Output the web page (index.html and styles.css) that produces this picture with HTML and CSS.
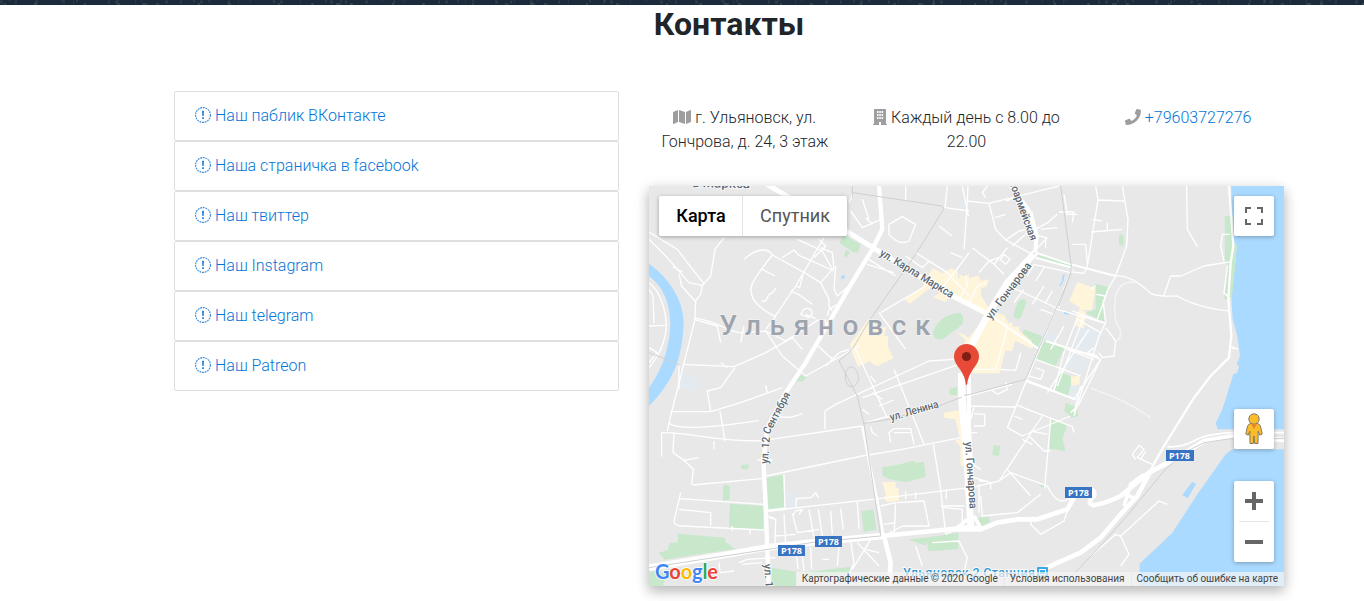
FILE: index.html
```html
<!DOCTYPE html>
<html lang="ru">
<head>
<meta charset="utf-8">
<title>Контакты</title>
<link rel="stylesheet" href="styles.css">
</head>
<body>
<svg class="defs" width="0" height="0" aria-hidden="true">
  <symbol id="bang" viewBox="0 0 16 16">
    <circle cx="8" cy="8" r="7.400" fill="none" stroke="#3289db" stroke-width="1.100" stroke-dasharray="1.900 .75"/>
    <path d="M7 3.800h2l-.3 5.200H7.300z M7.100 10.300h1.800V12H7.100z" fill="#2480dc"/>
  </symbol>
</svg>
<div class="hero-edge">
  <svg width="1364" height="5">
    <g fill="none" stroke="#747c73">
      <path d="M0 2H1364" stroke-width="3" opacity=".22" stroke-dasharray="3 12 2 18 3 25 2 8 1 34 2 5 3 17 1 29"/>
      <path d="M4 4H1364" stroke-width="2" opacity=".28" stroke-dasharray="2 28 3 47 2 31 3 22 5 9 3 39"/>
      <path d="M9 1H1364" stroke-width="2" opacity=".2" stroke-dasharray="1 51 2 13 2 40 1 22"/>
    </g>
  </svg>
</div>
<main class="contacts">
  <h2 class="title">Контакты</h2>
  <div class="columns">
    <ul class="links">
      <li><a href="#"><svg class="bang"><use href="#bang"/></svg>Наш паблик ВКонтакте</a></li>
      <li><a href="#"><svg class="bang"><use href="#bang"/></svg>Наша страничка в facebook</a></li>
      <li><a href="#"><svg class="bang"><use href="#bang"/></svg>Наш твиттер</a></li>
      <li><a href="#"><svg class="bang"><use href="#bang"/></svg>Наш Instagram</a></li>
      <li><a href="#"><svg class="bang"><use href="#bang"/></svg>Наш telegram</a></li>
      <li><a href="#"><svg class="bang"><use href="#bang"/></svg>Наш Patreon</a></li>
    </ul>
    <section class="place">
      <div class="facts">
        <p><svg class="fa" width="18" height="16" viewBox="0 0 576 512"><path d="M0 117.660v346.320c0 11.320 11.430 19.060 21.940 14.860L160 416V32L20.120 87.950A32.006 32.006 0 0 0 0 117.660zM192 416l192 64V96L192 32v384zM554.060 33.160L416 96v384l139.880-55.950A31.996 31.996 0 0 0 576 394.340V48.020c0-11.320-11.430-19.060-21.940-14.860z"/></svg> г. Ульяновск, ул. Гончрова, д. 24, 3 этаж</p>
        <p><svg class="fa" width="14" height="16" viewBox="0 0 14 16"><path fill-rule="evenodd" d="M1.500 0h11a.5.500 0 0 1 .5.500V15h.7a.3.300 0 0 1 .3.300V16H8v-3H6v3H0v-.7a.3.300 0 0 1 .3-.3H1V.5a.5.500 0 0 1 .5-.5zM4 2v2h1.500V2zM6.300 2v2h1.500V2zM8.600 2v2h1.500V2zM4 5v2h1.500V5zM6.300 5v2h1.500V5zM8.600 5v2h1.500V5zM4 8v2h1.500V8zM6.300 8v2h1.500V8zM8.600 8v2h1.500V8z"/></svg> Каждый день с 8.00 до 22.00</p>
        <p><svg class="fa" width="16" height="16" viewBox="0 0 512 512"><path d="M493.400 24.600l-104-24c-11.300-2.600-22.900 3.300-27.500 13.900l-48 112c-4.200 9.800-1.400 21.300 6.900 28l60.600 49.600c-36 76.700-98.900 140.500-177.200 177.200l-49.600-60.600c-6.800-8.300-18.200-11.100-28-6.900l-112 48C3.900 366.500-2 378.100.6 389.400l24 104C27.100 504.200 36.700 512 48 512c256.100 0 464-207.500 464-464 0-11.200-7.700-20.900-18.600-23.400z"/></svg> <a href="#">+79603727276</a></p>
      </div>
      <div class="map">
        <svg class="map-canvas" width="635" height="400" viewBox="649 186 635 400">
          <rect x="649" y="186" width="635" height="400" fill="#e8e8e8"/>

          <!-- areas, west half -->
          <g transform="translate(649 186) scale(.33333)">
            <path fill="#aadaff" d="M0 233C60 275 104 345 104 410C100 520 70 590 0 660V605C45 545 64 470 64 410C62 345 40 300 0 270zM577 270l10-3v10l-10 2z"/>
            <path fill="#e4ebf0" d="M100 560l50 15-10 42-50-10zM412 922h32v40l-30 5zM932 45h20v22h-20z"/>
            <g fill="#c8e8cb">
              <path d="M582 147l53 27-7 26-18-3-38-25zM590 192l13 5-10 17-8-3zM457 565l15 9-13 14-17-2z"/>
              <path d="M902 608l22-5v24l-22 1zM700 843l40-5 55-14 5 6 24-3 7 45-60 17-48-9-22-10zM275 840q5-5 20-5 8 4 4 12-10 5-22 1zM223 900q8-7 19 0v42l-20 2zM352 875l50-8 5 100-48 7zM243 953l100 7v75l-103-10zM637 975l37-4 8 60-38 7z"/>
              <path d="M86 1043l142 12 0 12 31 22-140 20-72 12-18-20 27-10 6-20 25-2zM778 1060l50-5 100-15v50l-90 6-5-30-3 13-23-8zM0 1155l50 5-7 40H0zM368 1145l75 12v43h-75zM460 1160l145-18v18l-120 18z"/>
            </g>
            <path fill="#fff5da" d="M850 247l32 15 25-16 20 12v20l33-14v86l-50-25-22 23-35-15 30-20-20-22-80 62-17-14 54-36zM603 475l55-75 12-3 15 30 28-4-8 25 13 5-2 28 18 35-50 25-24-15-33 16-15-34zM700 888h40v18h8l2 38-35 5-12-14 8-8zM885 680l42-7 20 10v160l-12-5v-55l-17-20 15-3-14-60-34-5zM925 440l18 3 17 15v12z"/>
          </g>

          <!-- areas, east half -->
          <g transform="translate(964 186) scale(.33333)">
            <path fill="#aadaff" d="M802 0V170L818 180L812 250L802 330L806 400L820 450L828 510L818 535L825 540L820 560L808 565L788 630L775 670L755 712L762 730H960V0zM960 790H805L785 805L700 925L625 1040L527 1133V1200H960zM685 887l11 7-25 43-16-10zM300 377l14 2v7l-14-2zM285 298l8-10 3-20 6-2-4 20-8 14z"/>
            <path fill="#e4ebf0" d="M350 425l65 15-25 65-60-20zM310 500l65 25-20 40-55-25zM322 575l25 0-15 60-18-6zM240 435l42 15-5 18-37-10z"/>
            <path fill="#c8e8cb" d="M-93 440Q-90 420-65 398Q-40 380-10 380Q2 395-5 415Q-20 430-45 445Q-70 470-89 455z"/>
            <g fill="#c8e8cb">
              <path d="M160 350Q170 335 183 341Q188 350 183 360L170 395Q153 405 148 388zM180 430l55 20-12 32-52-30zM242 460l60 25-30 60-55-25zM290 558l36 14-14 57-40-17zM305 650l35 15 3 25-20 5-22-20zM260 698l50 20-15 40 10 37-48-7zM88 777l20 3-3 30-20-3zM225 898l17-5-3 14zM42 995l32-3 4 18-30 12zM225 202l100 30v12l-105-30zM395 293l37 10-17 50 8 57-58-30 30-10z"/>
              <path d="M465 147q8-3 14 3v28q-8 4-14-3zM782 90h25v70l12 20-16 163-22-5 12-100-10-10z"/>
            </g>
            <path fill="#fff5da" d="M-15 265l25 12 35-8 5 15 25-4-7 22-17 5v20l30 50 40 10 12 25 10-3 5 15 17-3 2 15 35 28 7 22-13 0-10-7-32-15-10 30-20 0-17 68H25L0 470L70 390L-5 340zM340 288l55 20-12 65-28-2 10 8-5 48-27-7 5-30 10-25-32-20zM320 572l28-3-2 26-23 5z"/>
          </g>

          <!-- streets, west half -->
          <g class="road" transform="translate(649 186) scale(.33333)">
            <g stroke-width="4">
              <path d="M0 138L85 190L115 230L165 293L160 298L120 290L85 250L55 215L0 160M72 242L100 258M90 265L98 300L138 345M165 293L185 270L198 190L225 155M160 298L155 325L140 345L138 400L104 535L65 690L55 735"/>
              <path d="M285 220C330 180 360 190 370 207C320 270 300 300 307 320C310 350 340 370 378 392L440 300L525 155M370 207L470 262M340 250L378 270M425 315L448 325L490 355M380 305Q375 320 360 325L350 345L338 345M400 215L435 192L450 208L555 255M440 300L452 305L462 265"/>
              <path d="M470 262L515 290L540 340V360L550 375M515 290L550 250L520 195L445 160M515 185L550 200L555 250M510 160L530 180L495 215"/>
              <path d="M137 397C200 402 220 430 270 440L350 435L410 465L510 400M350 435L400 510L470 570L630 480M104 535L255 542L350 500L430 455L460 490M505 478L550 520M530 540L570 500L600 490M350 430L380 392M535 430L528 400"/>
              <path d="M65 677H185L275 650L400 605M185 677L175 615L215 605L258 545M60 712Q100 740 330 703M213 675L228 765M350 597L355 620M380 685Q410 705 460 682M75 740L72 800L105 823L150 815M105 823L133 850L128 895M38 812V740H55M195 765V790M130 897L345 877M325 822H370"/>
              <path d="M55 740C150 745 200 765 330 765L640 720M528 730V675L560 655L840 525L915 520M620 490L712 690M660 685L640 670M350 870L640 810L760 790L935 755M405 865L408 970M695 380L830 300M690 380L770 490M690 660L735 642M735 550L825 775M640 635L930 535M722 690L650 710"/>
              <path d="M92 938L345 955M95 920L75 1005Q75 1020 100 1020L345 1032M90 970L185 980V1018M355 975L690 938L960 905M853 775L875 910L890 1045M250 1020V1035M305 1030L302 1045"/>
              <path d="M360 995L380 1000L378 1070M405 983L410 1072M358 990L378 998M430 982L445 1040L510 1030M430 990L440 975L460 970L450 985M480 970L495 1055M508 970L520 1050M545 975L550 1045M575 968L583 1030M625 948L630 1030M440 962L442 938L485 935L500 920L508 935M378 1050L440 1045"/>
              <path d="M725 770L720 740L735 728H785L795 775M735 740H785M665 722L670 740L685 750M695 960L740 950L735 1050M745 950L825 945L840 1020L760 1020L705 1050M890 1045L940 1020V970L880 965M875 960H945M740 1010L705 1015M770 915V940M800 918V940M892 910V940"/>
              <path d="M440 1095L448 1150M458 1090L465 1155M485 1085L488 1150M520 1120H540M570 1080L565 1140M605 1065L615 1130L600 1165M665 1060L610 1150M270 1130L295 1120L380 1115M280 1135L340 1130M210 1130L213 1160L255 1155M625 1070L690 1140M650 1090L690 1100"/>
              <path d="M610 25L600 50M650 95L670 115M605 75L640 125L695 100M640 40L660 100M720 115L760 92L800 115L780 165Q750 180 720 145zM895 0L888 65L960 75M770 0V45M800 200L895 260L960 330M840 225L820 245L770 210M650 215L740 270M655 235L735 260M870 120L910 150M905 200L940 215M940 0L958 90M870 315L920 255L960 200M560 240L555 310L565 330L600 300M535 390L540 370L575 350M455 385Q465 360 485 370Q495 385 480 395zM470 385L500 398"/>
              <path d="M0 290C40 320 60 400 48 450S20 520 0 545M0 310L12 330L15 412M0 420L48 418M0 485L25 500L0 530M90 540V610M135 400L205 420L215 470M285 420L275 470M665 570L680 590M670 620L700 640M850 1070L930 1065L955 1115L945 1160M800 1080L820 1140M215 530L235 545"/>
            </g>
            <g fill="none">
              <path stroke-width="15" d="M345-10L410 28L600 140L680 190L900 325L1022 387"/>
              <path stroke-width="13" d="M690 0L700 130L670 190L600 305L560 375L470 530L410 620L355 725L343 820L350 960L355 1095L360 1200"/>
              <path stroke-width="20" d="M0 1145L240 1105L355 1084L500 1068L700 1050"/>
              <path stroke-width="14" d="M700 1050L960 1024M705 1050L725 1130L720 1200M934 560L935 650L950 810L962 1020"/>
              <path stroke-width="8" d="M640 720L665 850L690 970L705 1060M350 975L410 968"/>
            </g>
            <g class="rail">
              <path d="M612 20L878 60L885 68L800 205L660 405L610 490L570 525L625 630L645 715L695 1050L500 1068L0 1145M610 0V35M645 712L720 700L870 660L960 625M600 600C580 580 590 545 605 543S635 570 625 590Q613 608 600 600M0 500L90 535"/>
            </g>
          </g>

          <!-- streets, east half -->
          <g class="road" transform="translate(964 186) scale(.33333)">
            <g stroke-width="4">
              <path d="M12 0L10 45L0 190M10 45L75 52L285 0M75 52L95 130L125 162L205 205M125 45L170 30M70 0L55 20L65 35M92 95L125 85M125 162L165 135L190 130M145 180L190 140M25 185L90 235L120 265M90 235L130 185M45 260L75 225L105 215M110 220L120 205L138 220L125 235L108 220"/>
              <path d="M300 25L310 85H340M325 175H365L370 235M395 0L402 42L370 240L360 262L325 258M402 42L480 45M475 0L492 100L488 180L455 270L432 310L418 350L425 410L405 450L330 690M382 138L475 130M385 100L412 105M430 110V132M285 78H330L325 110"/>
              <path d="M135 300L265 360L280 370L425 412M455 270Q500 265 560 322Q580 332 640 330Q700 365 795 375M600 328L620 270L650 270L720 240L795 228M668 0L670 130L700 182M797 145H775L770 180L780 225M800 340L780 320L790 240M425 425L455 465L450 510L415 515L405 500"/>
              <path class="faint" d="M515 290Q470 280 455 330Q445 400 468 430Q475 460 455 465M380 605C450 635 480 640 560 695" stroke-width="5"/>
              <path d="M325 250L250 430L130 725L175 750L320 690M160 658L325 722L330 740M235 690L105 885L0 910M105 885L140 860L250 900Q280 960 310 940L330 935M260 700L242 907M130 850L200 930M20 700L30 665M30 683L62 685V720M30 720H60M175 760L205 775M195 750L240 795H260M150 690L175 700M200 735L250 745"/>
              <path d="M-5 635L145 595M80 610L100 625L130 610L125 590M0 550H95L130 425M0 660L155 663M230 370L270 385M340 395L300 500L270 615M360 390L280 600M375 430L250 620M325 375L420 410M340 400L410 440M245 465L410 520L330 640L185 580M310 490L390 522M215 520L350 570M215 545L240 555L230 580L195 570M105 550L155 553L165 520L170 500"/>
              <path d="M190 270L210 235L320 260M180 310L150 350M215 285L240 245M240 300L205 355M265 315L245 350M300 305L285 365M380 310L395 300M395 325L425 330L400 400M215 130L250 110L280 85M230 130L280 125M210 145L245 155V185M220 185L250 155M390 485L370 500L400 510"/>
              <path d="M45 895V980M15 870L80 890V910M45 885H65M50 930L55 990L160 980L230 925M310 975L300 1005L230 1045L200 1015L205 990M20 830L50 850M515 820L505 805L525 778L540 790L520 815L565 835M530 820L545 795M610 955L585 945L470 1050L450 1045M470 1050L495 1105L470 1140M455 1045L380 1110M320 680L345 655L410 520M350 600L330 680M810 490L800 480L822 490M0 740H40M300 420L260 490"/>
              <path d="M-15 340L10 300L5 270M15 350L40 300L65 290"/>
            </g>
            <g stroke-width="8">
              <path d="M795 0L808 180L800 230L793 340L802 450L795 515L740 570L690 635L600 780L555 860" stroke-width="7"/>
              <path d="M215 200L320 235L455 270M215 215L325 245M245 465L405 515M185 585L335 640M75 385L222 487" stroke-width="6"/>
              <path d="M960 740H800Q720 745 690 765Q650 785 610 782" stroke-width="5"/>
            </g>
            <g fill="none">
              <path stroke-width="20" d="M213 200L130 290L75 380L15 490"/>
              <path stroke-width="12" d="M140 0L200 80L218 150L213 205M-3 570L0 640L12 860L25 1020M15 560L15 720L25 900"/>
              <path stroke-width="14" d="M-40 1030L50 1030L100 1010L160 1000H220L310 970L330 935M370 915Q395 905 390 930Q365 950 390 958Q430 950 470 930L555 860L640 815L720 765L810 750L960 762"/>
              <path stroke-width="14" d="M560 855L520 930L470 985L410 1055L350 1100L180 1175"/>
              <path stroke-width="11" d="M540 865L500 895L480 960M480 925L510 935M10 1000L-20 1025H50L30 990"/>
            </g>
            <g class="rail">
              <path d="M290 0L322 240L320 265L185 580L20 625L0 628M320 260L285 360M300 1195L400 1090L480 1000L600 855L660 800L720 770L800 758H960"/>
            </g>
            <circle cx="211" cy="202" r="4" fill="#e4e4e4"/>
          </g>

          <!-- labels -->
          <g class="street">
            <text transform="translate(692 187) rotate(1)" textLength="58" lengthAdjust="spacingAndGlyphs">а Маркса</text>
            <text transform="translate(879 255) rotate(31)" textLength="84" lengthAdjust="spacingAndGlyphs">ул. Карла Маркса</text>
            <text transform="translate(991 320) rotate(-53)" textLength="68" lengthAdjust="spacingAndGlyphs">ул. Гончарова</text>
            <text transform="translate(1009 182) rotate(70)" textLength="63" lengthAdjust="spacingAndGlyphs">ноармейская</text>
            <text transform="translate(891 421) rotate(-16)" textLength="50" lengthAdjust="spacingAndGlyphs">ул. Ленина</text>
            <text transform="translate(965 442) rotate(86)" textLength="67" lengthAdjust="spacingAndGlyphs">ул. Гончарова</text>
            <text transform="translate(768 464) rotate(-86)" textLength="27" lengthAdjust="spacingAndGlyphs">ул. 12</text>
            <text transform="translate(769 435) rotate(-62)" textLength="46" lengthAdjust="spacingAndGlyphs">Сентября</text>
            <text transform="translate(764 564) rotate(86)" textLength="30" lengthAdjust="spacingAndGlyphs">ул. 12</text>
          </g>
          <text class="city" x="719.500" y="335" textLength="211">Ульяновск</text>
          <g class="station"><text x="903" y="577" textLength="132">Ульяновск 2 Станция</text>
            <rect x="1037" y="567" width="11" height="11" rx="1" fill="#3ba8e8"/><path d="M1039.500 569.500h6v5h-6zM1040 577l1-2M1045 577l-1-2" fill="none" stroke="#fff" stroke-width="1"/></g>
          <g class="shield">
            <rect x="778" y="545" width="27" height="11"/><text x="791.500" y="553.500">P178</text>
            <rect x="815" y="536" width="27" height="11"/><text x="828.500" y="544.500">P178</text>
            <rect x="1065" y="487" width="27" height="11"/><text x="1078.500" y="495.500">P178</text>
            <rect x="1166" y="450" width="28" height="11"/><text x="1179.500" y="458.500">P178</text>
          </g>
          <path d="M966.500 344a12.500 12.500 0 0 1 12.500 12.500c0 5-3.200 9-6.500 13.500-3 4.500-4.800 9-5.300 14.300q-.7 1.500-1.400 0c-.5-5.300-2.300-9.800-5.300-14.300-3.300-4.500-6.500-8.500-6.500-13.500A12.500 12.500 0 0 1 966.500 344z" fill="#e94a37"/>
          <circle cx="966.500" cy="356.500" r="4.600" fill="#811f14"/>
          <text class="logo" x="655" y="579" textLength="63"><tspan fill="#4285f4">G</tspan><tspan fill="#ea4335">o</tspan><tspan fill="#fbbc05">o</tspan><tspan fill="#4285f4">g</tspan><tspan fill="#34a853">l</tspan><tspan fill="#ea4335">e</tspan></text>
        </svg>
        <div class="map-type"><span class="on">Карта</span><span>Спутник</span></div>
        <div class="control full"><svg width="18" height="18"><path d="M1 6V1h5M12 1h5v5M17 12v5h-5M6 17H1v-5" fill="none" stroke="#666" stroke-width="2"/></svg></div>
        <div class="control pegman"><svg width="18" height="32" viewBox="0 0 18 32"><g fill="#fbbc2c" stroke="#77705a" stroke-width=".9"><path d="M5.500 10.500Q3 11 2.300 14L.8 21l2.400 1.200 1.600-4 .2 12.300h3.300L9 23l.7 7.500H13l.2-12.300 1.600 4 2.400-1.200-1.500-7q-.7-3-3.200-3.500z"/><circle cx="9" cy="6" r="5.200"/></g><path d="M6 11h6l-3 5z" fill="#e9842c"/></svg></div>
        <div class="control scale"><svg width="40" height="81"><path d="M11 20H29M20 11V29M11 61H29" stroke="#666" stroke-width="4"/><path d="M5 40.500H35" stroke="#e6e6e6"/></svg></div>
        <div class="terms"><span>Картографические данные © 2020 Google</span><span>Условия использования</span><span>Сообщить об ошибке на карте</span></div>
      </div>
    </section>
  </div>
</main>
</body>
</html>
```
FILE: styles.css
```css
* { box-sizing: border-box; }
body {
  margin: 0;
  height: 601px;
  overflow: hidden;
  background: #fff;
  color: #212529;
  font: 300 16px/24px Roboto, sans-serif;
}
a { color: #0275d8; text-decoration: none; }
.defs { position: absolute; }
.hero-edge { height: 5px; background: #1b2a3d; }
.hero-edge svg { display: block; }
.contacts { width: 1110px; margin-left: 174px; }
.title {
  margin: 0;
  text-align: center;
  font-size: 32px;
  line-height: 38px;
  font-weight: 700;
}
.columns {
  display: grid;
  grid-template-columns: 445px 635px;
  gap: 30px;
  padding-top: 48px;
}
.links { list-style: none; margin: 0; padding: 0; }
.links li {
  height: 50px;
  padding: 12px 20px 11px;
  border: 1px solid #dfdfdf;
  border-radius: 2px;
}
.links a { display: flex; align-items: flex-start; gap: 4px; }
.bang { width: 16px; height: 16px; margin-top: 3px; }
.facts {
  display: grid;
  grid-template-columns: repeat(3, 1fr);
  gap: 30px;
  padding-top: 15px;
  height: 95px;
  text-align: center;
}
.facts p { margin: 0; }
.fa { fill: #9e9e9e; vertical-align: -2px; }
.map {
  position: relative;
  width: 635px;
  height: 400px;
  box-shadow: 0 5px 11px rgba(0,0,0,.18), 0 4px 15px rgba(0,0,0,.15);
}
.map-canvas { display: block; }
.road { fill: none; stroke: #fff; stroke-linejoin: round; }
.faint { stroke: #f3f3f3; }
.rail { fill: none; stroke: #cdd0d0; stroke-width: 3; }
.street {
  font-size: 11px;
  font-weight: 500;
  fill: #5b6670;
  stroke: #fff;
  stroke-width: 1.500px;
  paint-order: stroke;
}
.city {
  font-size: 28px;
  font-weight: 500;
  fill: #9ea4ae;
  stroke: #f2f2f2;
  stroke-width: 1.500px;
  paint-order: stroke;
}
.station text {
  font-size: 12.500px;
  font-weight: 500;
  fill: #3298d0;
  stroke: #fff;
  stroke-width: 1.500px;
  paint-order: stroke;
}
.shield rect { fill: #3774c4; }
.shield text {
  fill: #fff;
  font: 700 9px "Noto Sans", sans-serif;
  text-anchor: middle;
}
.logo {
  font: 700 20px Lato, sans-serif;
  stroke: #fff;
  stroke-width: 1.500px;
  paint-order: stroke;
}
.map-type {
  position: absolute;
  left: 10px;
  top: 10px;
  display: flex;
  width: 188px;
  height: 40px;
  background: #fff;
  border-radius: 2px;
  box-shadow: 0 1px 4px rgba(0,0,0,.3);
  color: #565656;
  font-size: 18px;
  font-weight: 400;
  line-height: 40px;
}
.map-type span { flex: 1; text-align: center; }
.map-type .on {
  flex: 0 0 84px;
  padding-left: 1px;
  border-right: 1px solid #e4e4e4;
  color: #000;
  font-weight: 500;
}
.control {
  position: absolute;
  right: 10px;
  display: flex;
  align-items: center;
  justify-content: center;
  width: 40px;
  height: 40px;
  background: #fff;
  border-radius: 2px;
  box-shadow: 0 1px 4px rgba(0,0,0,.3);
}
.full { top: 10px; }
.pegman { top: 223px; }
.scale { top: 295px; height: 81px; }
.terms {
  position: absolute;
  right: 0;
  bottom: 0;
  display: flex;
  height: 14px;
  color: #444;
  font-size: 10px;
  font-weight: 400;
  line-height: 14px;
  white-space: nowrap;
}
.terms span { padding: 0 6px; background: rgba(245,245,245,.7); }
.terms span + span { border-left: 1px solid #e8e8e8; padding-left: 5px; }
```
